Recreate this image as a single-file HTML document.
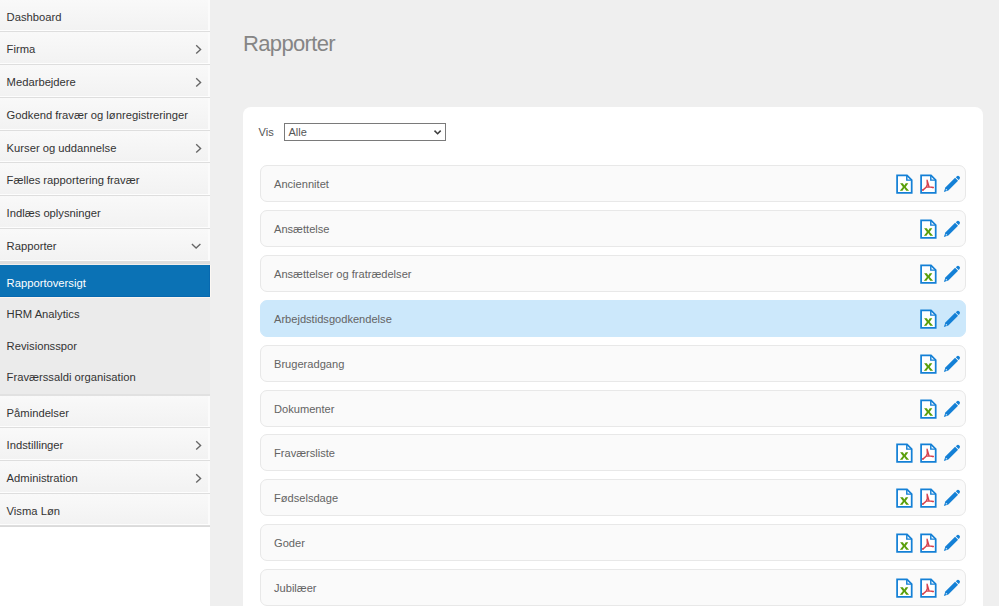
<!DOCTYPE html>
<html><head><meta charset="utf-8">
<style>
*{box-sizing:border-box;margin:0;padding:0}
html,body{width:999px;height:606px;overflow:hidden;background:#efefef;font-family:"Liberation Sans",sans-serif}
#side{position:absolute;left:0;top:0;width:210px;height:606px;background:#fff}
.it{position:absolute;left:0;width:210px;border-bottom:1px solid #dedede;background:linear-gradient(#f9f9f9,#f2f2f2);box-shadow:inset 0 -1px 0 #fdfdfd,inset -2px 0 0 #fbfbfb;font-size:11.22px;color:#333;padding-left:6.6px;white-space:nowrap}
.it span{position:relative;top:1px}
.ch{position:absolute;left:0;top:0}
#sub{position:absolute;left:0;top:262px;width:210px;height:134px;background:#ebebeb;border-top:2px solid #dedede;border-bottom:2px solid #e1e1e1}
.si{position:absolute;left:0;width:210px;height:31.5px;font-size:11.22px;color:#333;padding-left:6.6px;line-height:33px;white-space:nowrap}
.si.act{background:#0b72b5;color:#fff;height:32px;line-height:37px;box-shadow:0 -1px 0 #f2efec,0 1px 0 #fbf5f0,1px 0 0 #fcf8f4,inset 0 -1px 0 #0769b0,inset -1px 0 0 #0769b0}
#title{position:absolute;left:243px;top:32px;font-size:22px;color:#858585;line-height:24px;letter-spacing:-0.65px}
#card{position:absolute;left:243px;top:106.5px;width:740px;height:600px;background:#fff;border-radius:8px}
#vis{position:absolute;left:258.5px;top:125px;font-size:11.1px;color:#555;line-height:14px}
#sel{position:absolute;left:284px;top:123px;width:162px;height:18px;border:1px solid #7a7a7a;background:#fff;font-size:11px;color:#555;padding-left:3.5px;line-height:16px}
#sel svg{position:absolute;right:3px;top:5px}
.row{position:absolute;left:260px;width:706px;height:37px;border:1px solid #e8e8e8;border-radius:7px;background:#fafafa;font-size:11.1px;color:#636363;padding-left:13px;line-height:37px}
.row.hl{background:#cce8fb;border-color:#cce8fb}
.ic{position:absolute;top:8px}
.pen{position:absolute;left:679px;top:6px}
</style></head><body>
<svg width="0" height="0" style="position:absolute"><defs>
<g id="doc"><path d="M1.1 1.3 H11 L15.7 6 V18.9 H1.1 Z" fill="#fff" stroke="#1480d6" stroke-width="1.75"/><path d="M10.8 1.3 V6.1 H15.7" fill="none" stroke="#1480d6" stroke-width="1.45"/></g>
<g id="xls"><use href="#doc"/><path d="M4.1 9.3 H6.9 L8.3 11.6 L9.7 9.3 H12.3 L9.7 12.9 L13.1 16.7 H10.2 L8.3 14.1 L6.5 16.7 H3.8 L6.9 12.9 Z" fill="#5a9f0a"/></g>
<g id="pdf"><use href="#doc"/><path d="M7.1 6.2 C7.2 8 7.3 9.5 7.3 10.9 L6.2 13.1 L9 12.8 Z M6.1 13.2 C5 14.3 3.8 15.3 2.9 16 M9 12.8 C10.4 13 12 13.3 13.2 13.5" fill="none" stroke="#d6424e" stroke-width="1.35" stroke-linejoin="round" stroke-linecap="round"/><circle cx="2.9" cy="15.9" r="0.9" fill="#d6424e"/><circle cx="13.1" cy="13.5" r="0.8" fill="#d6424e"/></g>
<g id="pen"><g transform="translate(16.55 7.25) rotate(-45)"><path d="M-18 0.1 L-13.75 -2.1 H0 V2.1 H-13.75 Z" fill="#1480d6"/><path d="M0.9 -1.95 H2.1 A1.9 1.95 0 0 1 2.1 1.95 H0.9 Z" fill="#1480d6"/><circle cx="-14.6" cy="0.2" r="0.75" fill="#fff" fill-opacity="0.75"/></g></g>
</defs></svg>
<div id="side">
<div class="it" style="top:0px;height:32px;line-height:32px"><span>Dashboard</span></div>
<div class="it" style="top:32px;height:33px;line-height:33px"><span>Firma</span><svg class="ch" width="210" height="33"><path d="M196.2 13.3 L200.6 17.4 L196.2 21.5" fill="none" stroke="#666" stroke-width="1.35"/></svg></div>
<div class="it" style="top:65px;height:33px;line-height:33px"><span>Medarbejdere</span><svg class="ch" width="210" height="33"><path d="M196.2 13.3 L200.6 17.4 L196.2 21.5" fill="none" stroke="#666" stroke-width="1.35"/></svg></div>
<div class="it" style="top:98px;height:33px;line-height:33px"><span>Godkend fravær og lønregistreringer</span></div>
<div class="it" style="top:131px;height:32px;line-height:32px"><span>Kurser og uddannelse</span><svg class="ch" width="210" height="33"><path d="M196.2 13.3 L200.6 17.4 L196.2 21.5" fill="none" stroke="#666" stroke-width="1.35"/></svg></div>
<div class="it" style="top:163px;height:33px;line-height:33px"><span>Fælles rapportering fravær</span></div>
<div class="it" style="top:196px;height:33px;line-height:33px"><span>Indlæs oplysninger</span></div>
<div class="it" style="top:229px;height:33px;line-height:33px"><span>Rapporter</span><svg class="ch" width="210" height="33"><path d="M191.9 15.1 L196.1 19.1 L200.4 15.1" fill="none" stroke="#666" stroke-width="1.35"/></svg></div>
<div class="it" style="top:396px;height:32px;line-height:32px"><span>Påmindelser</span></div>
<div class="it" style="top:428px;height:33px;line-height:33px"><span>Indstillinger</span><svg class="ch" width="210" height="33"><path d="M196.2 13.3 L200.6 17.4 L196.2 21.5" fill="none" stroke="#666" stroke-width="1.35"/></svg></div>
<div class="it" style="top:461px;height:33px;line-height:33px"><span>Administration</span><svg class="ch" width="210" height="33"><path d="M196.2 13.3 L200.6 17.4 L196.2 21.5" fill="none" stroke="#666" stroke-width="1.35"/></svg></div>
<div class="it" style="top:494px;height:32px;line-height:32px;box-shadow:inset 0 -1px 0 #fdfdfd,inset -2px 0 0 #fbfbfb,0 1px 0 #dadada"><span>Visma Løn</span></div>
<div id="sub">
<div class="si act" style="top:1px">Rapportoversigt</div>
<div class="si" style="top:34px">HRM Analytics</div>
<div class="si" style="top:65.5px">Revisionsspor</div>
<div class="si" style="top:97px">Fraværssaldi organisation</div>
</div>
</div>

<div id="title">Rapporter</div>
<div id="card"></div>
<div id="vis">Vis</div>
<div id="sel">Alle<svg width="9" height="7" viewBox="0 0 9 7"><path d="M1.5 1.6 L4.6 4.7 L7.7 1.6" fill="none" stroke="#3c3c3c" stroke-width="1.5"/></svg></div>

<div class="row" style="top:165px">Anciennitet<svg class="ic" style="left:635px" width="17" height="20"><use href="#xls"/></svg><svg class="ic" style="left:659px" width="17" height="20"><use href="#pdf"/></svg><svg class="pen" width="24" height="24"><use href="#pen"/></svg></div>
<div class="row" style="top:210px">Ansættelse<svg class="ic" style="left:659px" width="17" height="20"><use href="#xls"/></svg><svg class="pen" width="24" height="24"><use href="#pen"/></svg></div>
<div class="row" style="top:255px">Ansættelser og fratrædelser<svg class="ic" style="left:659px" width="17" height="20"><use href="#xls"/></svg><svg class="pen" width="24" height="24"><use href="#pen"/></svg></div>
<div class="row hl" style="top:300px">Arbejdstidsgodkendelse<svg class="ic" style="left:659px" width="17" height="20"><use href="#xls"/></svg><svg class="pen" width="24" height="24"><use href="#pen"/></svg></div>
<div class="row" style="top:345px">Brugeradgang<svg class="ic" style="left:659px" width="17" height="20"><use href="#xls"/></svg><svg class="pen" width="24" height="24"><use href="#pen"/></svg></div>
<div class="row" style="top:390px">Dokumenter<svg class="ic" style="left:659px" width="17" height="20"><use href="#xls"/></svg><svg class="pen" width="24" height="24"><use href="#pen"/></svg></div>
<div class="row" style="top:434px">Fraværsliste<svg class="ic" style="left:635px" width="17" height="20"><use href="#xls"/></svg><svg class="ic" style="left:659px" width="17" height="20"><use href="#pdf"/></svg><svg class="pen" width="24" height="24"><use href="#pen"/></svg></div>
<div class="row" style="top:479px">Fødselsdage<svg class="ic" style="left:635px" width="17" height="20"><use href="#xls"/></svg><svg class="ic" style="left:659px" width="17" height="20"><use href="#pdf"/></svg><svg class="pen" width="24" height="24"><use href="#pen"/></svg></div>
<div class="row" style="top:524px">Goder<svg class="ic" style="left:635px" width="17" height="20"><use href="#xls"/></svg><svg class="ic" style="left:659px" width="17" height="20"><use href="#pdf"/></svg><svg class="pen" width="24" height="24"><use href="#pen"/></svg></div>
<div class="row" style="top:569px">Jubilæer<svg class="ic" style="left:635px" width="17" height="20"><use href="#xls"/></svg><svg class="ic" style="left:659px" width="17" height="20"><use href="#pdf"/></svg><svg class="pen" width="24" height="24"><use href="#pen"/></svg></div>
</body></html>
